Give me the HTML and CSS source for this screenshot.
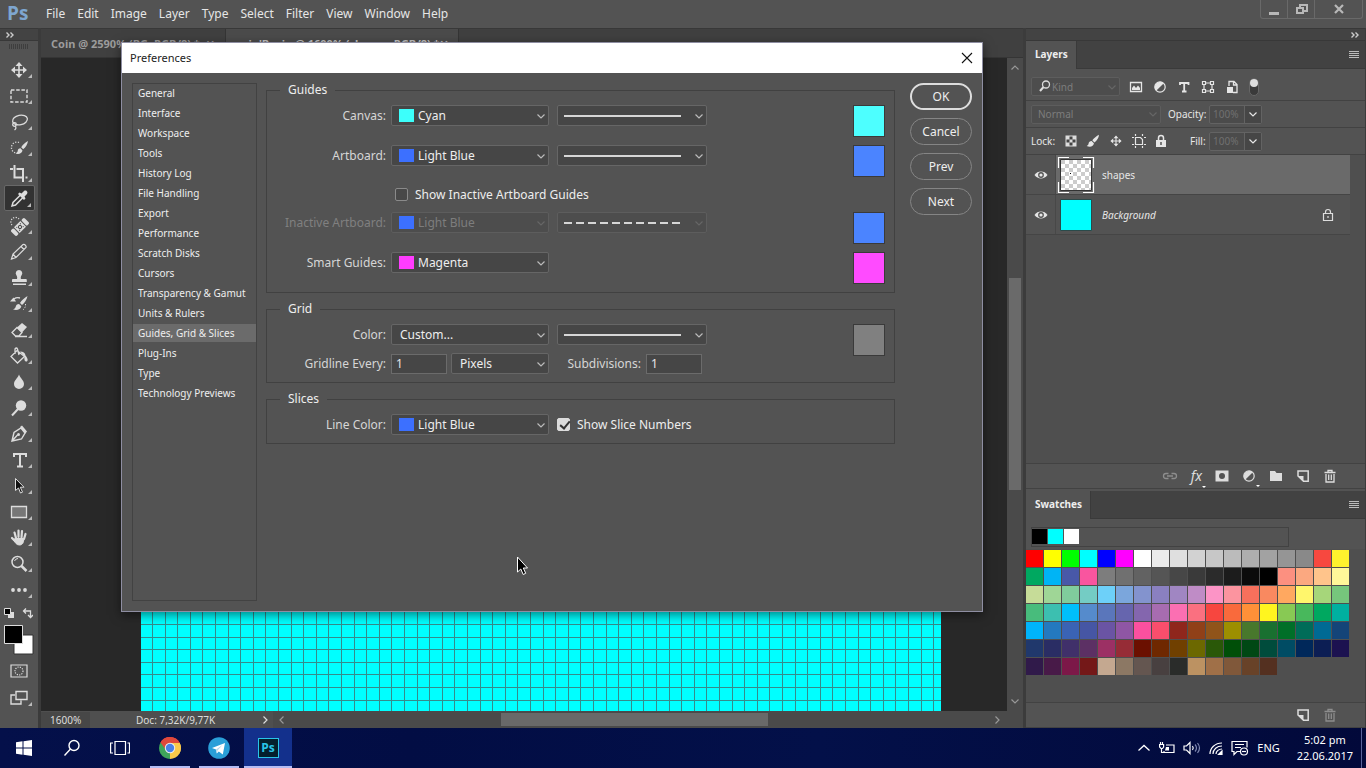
FILE: index.html
```html
<!DOCTYPE html>
<html lang="en">
<head>
<meta charset="utf-8">
<title>Preferences</title>
<link rel="stylesheet" href="styles.css">
</head>
<body>
<svg class="defs" aria-hidden="true">
  <defs>
    <symbol id="chev" viewBox="0 0 10 10"><path d="M1.5 3.5 5 7l3.500-3.500" fill="none" stroke="currentColor" stroke-width="1.200"/></symbol>
    <symbol id="hamb" viewBox="0 0 10 8"><path d="M0 .5h10M0 2.500h10M0 4.500h10M0 6.500h10" stroke="currentColor" stroke-width="1"/></symbol>
    <symbol id="dbl" viewBox="0 0 8 6"><path d="M.5.5 3 3 .5 5.500M4.500.5 7 3 4.500 5.500" fill="none" stroke="currentColor" stroke-width="1.400"/></symbol>
    <symbol id="move" viewBox="0 0 20 20"><path d="M10 4v12M4 10h12" stroke="currentColor" stroke-width="1.600"/><path d="M10 2 13.500 6h-7zM10 18l3.500-4h-7zM2 10l4-3.500v7zM18 10l-4-3.500v7z" fill="currentColor"/></symbol>
    <symbol id="brush" viewBox="0 0 20 20"><path d="M18.500 1c-3 1.500-7.500 5-9.500 8l3 3C15.500 9.500 18.500 5 18.500 1zM8 10c-2.500 0-4 1.500-4.300 3.500C3.400 15.500 2.500 16.500 1 17c4 2 9.800 1.500 10.300-3.700z" fill="currentColor"/></symbol>
    <symbol id="new" viewBox="0 0 14 14"><path d="M2 2h10.200v10.200H7.500L2 7V2z" fill="none" stroke="currentColor" stroke-width="1.500"/><path d="M2 7h5.500v5.500z" fill="currentColor"/></symbol>
    <symbol id="trash" viewBox="0 0 14 14"><path d="M1.500 3.500h11M5 3.200V1.500h4v1.700M3 5v8h8V5M5.700 5.500v5.500M8.300 5.500v5.500" fill="none" stroke="currentColor" stroke-width="1.300"/></symbol>
    <symbol id="adjust" viewBox="0 0 14 14"><circle cx="7" cy="7" r="5.200" fill="none" stroke="currentColor" stroke-width="1.200"/><path d="M10.800 3.200 3.200 10.800A5.400 5.400 0 0 1 10.800 3.200z" fill="currentColor"/></symbol>
    <symbol id="eye" viewBox="0 0 14 10"><path d="M.5 5C3.500.4 10.500.4 13.500 5 10.500 9.600 3.500 9.600.5 5z" fill="currentColor"/><circle cx="7" cy="5" r="2.900" fill="#535353"/><circle cx="7" cy="5" r="1.600" fill="currentColor"/></symbol>
    <pattern id="gridlines" width="63" height="63" x="11" y="62" patternUnits="userSpaceOnUse">
      <path d="M.5 0v63M13.500 0v63M25.500 0v63M38.500 0v63M50.500 0v63M0 .5h63M0 13.500h63M0 25.500h63M0 38.500h63M0 50.500h63" stroke="#358b8b" stroke-width="1"/>
    </pattern>
    <pattern id="checker" width="8" height="8" patternUnits="userSpaceOnUse"><path d="M0 0h4v4H0zM4 4h4v4H4z" fill="#ccc"/></pattern>
  </defs>
</svg>

<div class="app">
  <header class="menubar">
    <span class="logo">Ps</span>
    <nav class="menus">
      <a href="#">File</a><a href="#">Edit</a><a href="#">Image</a><a href="#">Layer</a><a href="#">Type</a><a href="#">Select</a><a href="#">Filter</a><a href="#">View</a><a href="#">Window</a><a href="#">Help</a>
    </nav>
    <div class="winctl">
      <button aria-label="Minimize"><svg width="12" height="12"><path d="M1 10.500h10" stroke="currentColor" stroke-width="3"/></svg></button>
      <button aria-label="Restore"><svg width="13" height="12" fill="none" stroke="currentColor" stroke-width="2"><path d="M5 6V2h7v6H8"/><path d="M2 5h6v5H2z"/></svg></button>
      <button aria-label="Close" class="wide"><svg width="12" height="11"><path d="M2 1l8 8M10 1 2 9" stroke="currentColor" stroke-width="2.200"/></svg></button>
    </div>
  </header>

  <div class="workspace">
    <aside class="toolbar">
      <div class="strip"><svg width="8" height="6"><use href="#dbl"/></svg></div>
      <div class="grip"></div>
      <div class="tools">
        <button aria-label="Move"><svg viewBox="0 0 20 20"><use href="#move"/></svg></button>
        <button aria-label="Marquee"><svg viewBox="0 0 20 20"><path d="M2 4h16v12H2z" fill="none" stroke="currentColor" stroke-width="1.400" stroke-dasharray="3.500 1.700"/></svg></button>
        <button aria-label="Lasso"><svg viewBox="0 0 20 20" fill="none" stroke="currentColor" stroke-width="1.300"><ellipse cx="11" cy="8" rx="7.500" ry="4.800" transform="rotate(-12 11 8)"/><circle cx="5.500" cy="12.500" r="1.800"/><path d="M6 14c1.500 1.500 1 3-.5 4"/></svg></button>
        <button aria-label="Quick selection"><svg viewBox="0 0 20 20"><path d="M10 4.500A5.500 5.500 0 1 0 9 15" fill="none" stroke="currentColor" stroke-width="1.300" stroke-dasharray="1.200 1.500"/><path d="M19 3c-3 1.500-5 3.500-6.800 6.200l2 2C17 9 18.500 6 19 3zM11.500 10.300c-2 0-2.500 1.200-2.800 2.600-.2 1.200-.9 2-2.200 2.600 3 .9 6.400.4 7-3z" fill="currentColor"/></svg></button>
        <button aria-label="Crop"><svg viewBox="0 0 20 20" fill="none" stroke="currentColor" stroke-width="2"><path d="M5.500 1v12.500h9M1 5h3m3.500 0h6.500V18M16.500 13.500h2"/></svg></button>
        <button aria-label="Eyedropper" class="active"><svg viewBox="0 0 20 20"><path d="M11.500 6 4 13.500 3 17l3.500-1L14 8.500" fill="none" stroke="currentColor" stroke-width="1.500"/><path d="m9 5 1.500-1.500 2 1L15 2c2-1.500 4.500 1 3 3l-2.500 2.500 1 2L15 11z" fill="currentColor"/></svg></button>
        <button aria-label="Healing brush"><svg viewBox="0 0 20 20"><path d="M3 9a4.500 4.500 0 0 1 7-6" fill="none" stroke="currentColor" stroke-width="1.200" stroke-dasharray="1.200 1.400"/><g transform="rotate(-45 11 11)"><rect x="1.500" y="7" width="4" height="8" rx="1.500" fill="currentColor"/><rect x="16.500" y="7" width="4" height="8" rx="1.500" fill="currentColor"/><rect x="6.500" y="7" width="9" height="8" fill="currentColor"/><circle cx="11" cy="11" r="1.600" fill="none" stroke="#444"/><path d="M8 9h1M8 13h1M13 9h1M13 13h1" stroke="#444"/></g></svg></button>
        <button aria-label="Pencil"><svg viewBox="0 0 20 20" fill="none" stroke="currentColor" stroke-width="1.200"><path d="m2.500 17 1.500-5L14 2.500q1.500-.5 2.500.8t.5 2.200L7 15.500zM4 12l3 3.500M12 4.500l3 3"/></svg></button>
        <button aria-label="Stamp"><svg viewBox="0 0 20 20" fill="currentColor"><path d="M10 2a3.300 3.300 0 0 1 2.600 5.300c-1 1.500-1 3-.6 3.700h5q.8 0 .8 1v2H3v-2q0-1 .8-1H8c.4-1 .3-2.500-.6-3.700A3.300 3.300 0 0 1 10 2zM4 15.500h13V17H4z"/></svg></button>
        <button aria-label="History brush"><svg viewBox="0 0 20 20"><path d="M18.500 2c-3 1.500-6 4.500-7.500 7l2 2c2.500-2 5-5.500 5.500-9zM10 10c-2 0-3 1.200-3.300 2.800-.2 1.300-1.200 2-2.700 2.700 3.500 1 7.700.4 8.300-3.300zM1 7.500l3.500-4 2.500 4z" fill="currentColor"/><path d="M5 5c2-1.500 4-1.500 6-1" fill="none" stroke="currentColor" stroke-width="1.300"/><path d="M16.500 10c.3 3-1 5-3.500 6.500" fill="none" stroke="currentColor" stroke-dasharray="1.200 1.400"/></svg></button>
        <button aria-label="Eraser"><svg viewBox="0 0 20 20"><path d="m8 7.500 5-4.500 5 4-5 5.500z" fill="currentColor"/><path d="m8 7.500-5 5 3.500 3.500H10l3-3.500zM6 16.500h12" fill="none" stroke="currentColor" stroke-width="1.300"/></svg></button>
        <button aria-label="Paint bucket"><svg viewBox="0 0 20 20"><path d="m8 4.500 7.500 6-7 6.500L2 10.500zM6 8V3q1.500-2 2.500 0L10 9" fill="none" stroke="currentColor" stroke-width="1.300"/><path d="M11 5.500q5 0 5.500 4c3 3.500 2.500 6 .8 6s-2.300-2-1.800-5z" fill="currentColor"/></svg></button>
        <button aria-label="Blur"><svg viewBox="0 0 20 20"><path d="M10 2.500c1.500 4 5 6 5 9.500a5 5 0 0 1-10 0c0-3.500 3.500-5.500 5-9.500z" fill="currentColor"/></svg></button>
        <button aria-label="Dodge"><svg viewBox="0 0 20 20"><circle cx="12" cy="7.500" r="5.200" fill="currentColor"/><path d="m9 11-6 6.500" stroke="currentColor" stroke-width="2"/></svg></button>
        <button aria-label="Pen"><svg viewBox="0 0 20 20"><path d="M3 17 5 8.500 12 4l4 5-3.500 6zM3 17l5.500-6" fill="none" stroke="currentColor" stroke-width="1.400"/><circle cx="9.500" cy="10.500" r="1.500" fill="currentColor"/><path d="m11 3 2-1.500 5 6-1.500 2z" fill="currentColor"/></svg></button>
        <button aria-label="Type"><svg viewBox="0 0 20 20"><path d="M5 7V4h12v3M11 4v12.500M8 16.500h6" fill="none" stroke="currentColor" stroke-width="2"/></svg></button>
        <button aria-label="Path selection"><svg viewBox="0 0 20 20"><path d="M6.500 2.500v12l3-2.500 2 5 2-.8-2.200-5H15z" fill="#111" stroke="currentColor"/></svg></button>
        <button aria-label="Rectangle"><svg viewBox="0 0 20 20"><path d="M2.500 4.500h15v11h-15z" fill="#777" stroke="currentColor" stroke-width="1.300"/></svg></button>
        <button aria-label="Hand"><svg viewBox="0 0 20 20" fill="none" stroke="currentColor" stroke-width="2.200" stroke-linecap="round"><path d="M7 10 5.500 4.500M9.500 9V2.500M12.500 9.500l.5-6.500M15 11l1.500-5M6 13l-3-3"/><path d="M6.500 10.500h8c.5 4-1 6.500-4 6.500s-4-2-6-5z" fill="currentColor" stroke-width="1"/></svg></button>
        <button aria-label="Zoom"><svg viewBox="0 0 20 20" fill="none" stroke="currentColor"><circle cx="8.500" cy="8" r="5.500" stroke-width="1.500"/><path d="M5.500 7q1-2.500 3.500-2.500" stroke-width="1"/><path d="m12.500 12 5 5" stroke-width="2.500"/></svg></button>
        <button aria-label="More tools"><svg viewBox="0 0 20 20" fill="currentColor"><circle cx="4" cy="10" r="1.900"/><circle cx="10" cy="10" r="1.900"/><circle cx="16" cy="10" r="1.900"/></svg></button>
      </div>
      <div class="mini">
        <svg width="10" height="10"><path d="M4 4h6v6H4z" fill="#ddd"/><path d="M.5.5h6v6h-6z" fill="#000" stroke="#ddd"/></svg>
        <svg width="11" height="11" fill="none" stroke="#ddd" stroke-width="1.300"><path d="M2 3h6.500v6M4 .5 1.500 3 4 5.500M6 7l2.500 2.500L11 7"/></svg>
      </div>
      <svg class="fgbg" width="30" height="30"><path d="M10 10h19v19H10z" fill="#fff" stroke="#333"/><path d="M.5.5h18v18H.5z" fill="#000" stroke="#ddd"/></svg>
      <button class="mode" aria-label="Quick mask"><svg viewBox="0 0 20 20" fill="none" stroke="currentColor" stroke-width="1.200"><path d="M2 4h16v12H2z"/><circle cx="10" cy="10" r="4" stroke-dasharray="1.200 1.200"/></svg></button>
      <button class="mode corner" aria-label="Screen mode"><svg viewBox="0 0 20 20" fill="none" stroke="currentColor" stroke-width="1.400"><path d="M7 3.500h11v8H7zM6 7H2v9h10v-3.500"/></svg></button>
    </aside>

    <main class="document">
      <div class="tabs">
        <a href="#" class="tab">Coin @ 2590% (BG, RGB/8) * <span class="x">×</span></a>
        <a href="#" class="tab current">coin'Bcoin @ 1600% (shapes, RGB/8) * <span class="x">×</span></a>
      </div>
      <div class="stage">
        <div class="canvas"><svg width="100%" height="100%"><rect width="100%" height="100%" fill="url(#gridlines)"/></svg></div>
        <div class="vscroll"><svg width="10" height="10" class="up"><use href="#chev"/></svg><div class="vthumb"></div><svg width="10" height="10"><use href="#chev"/></svg></div>
      </div>
      <div class="status">
        <span class="pct">1600%</span>
        <span class="doc">Doc: 7,32K/9,77K</span>
        <svg width="10" height="10" class="right lit"><use href="#chev"/></svg>
        <div class="hscroll"><svg width="10" height="10" class="left"><use href="#chev"/></svg><div class="hthumb"></div><svg width="10" height="10" class="right"><use href="#chev"/></svg></div>
      </div>
    </main>

    <aside class="panels">
      <div class="strip end"><svg width="8" height="6"><use href="#dbl"/></svg></div>
      <section class="panel layers">
        <div class="phead"><h2>Layers</h2><svg width="10" height="8"><use href="#hamb"/></svg></div>
        <div class="prow filter">
          <div class="sel dim kind"><svg class="mag" width="12" height="12" fill="none" stroke="#ddd"><circle cx="7" cy="4.500" r="3.500" stroke-width="1.300"/><path d="M4.500 7 1 11" stroke-width="2"/></svg><select aria-label="Filter kind" disabled><option>Kind</option></select><svg class="cv" width="10" height="10"><use href="#chev"/></svg></div>
          <div class="ficons">
            <svg width="14" height="14"><path d="M1.500 2.500h11v9h-11z" fill="none" stroke="currentColor" stroke-width="1.300"/><path d="M3 10V8l2-2.500L7 8l2-2.500L11 8v2z" fill="currentColor"/></svg>
            <svg width="14" height="14"><use href="#adjust"/></svg>
            <svg width="14" height="14"><path d="M3 5V3h8.500v2M7.200 3v9M5 11.500h4.500" fill="none" stroke="currentColor" stroke-width="1.800"/></svg>
            <svg width="14" height="14" fill="none" stroke="currentColor" stroke-width="1.200"><path d="M3 3h8v8H3z"/><path d="M1.500 1.500h3v3h-3zM9.500 1.500h3v3h-3zM1.500 9.500h3v3h-3zM9.500 9.500h3v3h-3z" fill="#535353"/></svg>
            <svg width="14" height="14"><path d="M4 6V1.500h5L12 4.500v8H8M8.500 2v3H12" fill="none" stroke="currentColor" stroke-width="1.300"/><path d="M2 7h6v6H2z" fill="currentColor"/></svg>
            <svg width="10" height="18"><rect x=".5" y=".5" width="9" height="17" rx="4.500" fill="#3a3a3a" stroke="#666"/><circle cx="5" cy="5" r="4" fill="#ddd"/></svg>
          </div>
        </div>
        <div class="prow blend">
          <div class="sel dim mode-sel"><select aria-label="Blend mode" disabled><option>Normal</option></select><svg class="cv" width="10" height="10"><use href="#chev"/></svg></div>
          <label for="op">Opacity:</label>
          <div class="combo"><input id="op" value="100%" disabled><button aria-label="Opacity slider"><svg width="10" height="10"><use href="#chev"/></svg></button></div>
        </div>
        <div class="prow lock">
          <span>Lock:</span>
          <div class="licons">
            <svg width="12" height="12"><path d="M.5.5h11v11H.5z" fill="#ddd"/><path d="M4.500 1.500h3v3h-3zM1.500 4.500h3v3h-3zM7.500 4.500h3v3h-3zM4.500 7.500h3v3h-3z" fill="#444"/></svg>
            <svg width="14" height="14"><use href="#brush"/></svg>
            <svg width="14" height="14"><use href="#move"/></svg>
            <svg width="14" height="14" fill="none" stroke="currentColor" stroke-width="1.200"><path d="M3.500 3.500h5l2 2v5h-7zM0 3.500h2M3.500 0v2M12 10.500h2M10.500 12v2M0 10.500h2M3.500 12v2M12 3.500h2M10.500 0v2"/></svg>
            <svg width="12" height="14"><path d="M1 6h10v7H1z" fill="currentColor"/><path d="M3.500 6V4a2.500 2.500 0 0 1 5 0v2" fill="none" stroke="currentColor" stroke-width="1.500"/><path d="M6 8v3" stroke="#555" stroke-width="1.500"/></svg>
          </div>
          <label for="fill">Fill:</label>
          <div class="combo"><input id="fill" value="100%" disabled><button aria-label="Fill slider"><svg width="10" height="10"><use href="#chev"/></svg></button></div>
        </div>
        <div class="layerlist">
          <div class="layer">
            <span class="vis"><svg width="14" height="10"><use href="#eye"/></svg></span>
            <div class="lbody on"><svg width="38" height="38"><path d="M3.500 3.500h31v31h-31z" fill="#fff" stroke="#333"/><rect x="4" y="4" width="30" height="30" fill="url(#checker)"/><path d="M13 17h1v1h-1z"/><path d="M1.500 12V1.500H12M26 1.500h10.500V12M36.500 26v10.500H26M12 36.500H1.500V26" fill="none" stroke="#fff" stroke-width="1.200"/></svg><span>shapes</span></div>
          </div>
          <div class="layer">
            <span class="vis"><svg width="14" height="10"><use href="#eye"/></svg></span>
            <div class="lbody"><svg width="38" height="38"><path d="M3.500 3.500h31v31h-31z" fill="#0ff" stroke="#2b4a4a"/></svg><em>Background</em><svg class="lk" width="12" height="14" fill="none" stroke="#ddd" stroke-width="1.200"><path d="M1.500 5.500h9v7h-9zM3.500 5.500V4a2.500 2.500 0 0 1 5 0v1.500M6 8v2"/></svg></div>
          </div>
        </div>
        <div class="pfoot">
          <svg width="16" height="14" class="off" fill="none" stroke="currentColor" stroke-width="1.300"><path d="M6.500 4.500H4a2.500 2.500 0 0 0 0 5h2.500M9.500 4.500H12a2.500 2.500 0 0 1 0 5H9.500M5 7h6"/></svg>
          <span class="fx drop">fx</span>
          <svg width="14" height="14"><path d="M.5 1.500h13v11H.5z" fill="currentColor"/><circle cx="7" cy="7" r="3" fill="#535353"/></svg>
          <span class="drop"><svg width="14" height="14"><use href="#adjust"/></svg></span>
          <svg width="14" height="14"><path d="M1 2h5l1.500 2H13v8H1z" fill="currentColor"/></svg>
          <svg width="14" height="14"><use href="#new"/></svg>
          <svg width="14" height="14"><use href="#trash"/></svg>
        </div>
      </section>
      <section class="panel swatches">
        <div class="phead"><h2>Swatches</h2><svg width="10" height="8"><use href="#hamb"/></svg></div>
        <div class="recent"><i class="k"></i><i class="c"></i><i class="w"></i></div>
        <div class="swgrid" id="swgrid"></div>
        <div class="pfoot"><svg width="14" height="14"><use href="#new"/></svg><svg width="14" height="14" class="off"><use href="#trash"/></svg></div>
      </section>
    </aside>
  </div>

  <div class="dialog" role="dialog" aria-labelledby="dlg-title">
    <div class="dtitle"><span id="dlg-title">Preferences</span><button aria-label="Close"><svg width="12" height="12"><path d="m1 1 10 10M11 1 1 11" stroke="#111" stroke-width="1.100"/></svg></button></div>
    <div class="dbody">
      <nav class="cats">
        <a href="#">General</a><a href="#">Interface</a><a href="#">Workspace</a><a href="#">Tools</a><a href="#">History Log</a><a href="#">File Handling</a><a href="#">Export</a><a href="#">Performance</a><a href="#">Scratch Disks</a><a href="#">Cursors</a><a href="#">Transparency &amp; Gamut</a><a href="#">Units &amp; Rulers</a><a href="#" class="on">Guides, Grid &amp; Slices</a><a href="#">Plug-Ins</a><a href="#">Type</a><a href="#">Technology Previews</a>
      </nav>
      <form class="groups">
        <fieldset>
          <legend>Guides</legend>
          <div class="fgrid">
            <label for="cv">Canvas:</label>
            <div class="sel chip cyan"><select id="cv"><option>Cyan</option></select><svg class="cv" width="10" height="10"><use href="#chev"/></svg></div>
            <div class="sel line"><select aria-label="Canvas line style"><option aria-label="Solid"></option></select><svg class="cv" width="10" height="10"><use href="#chev"/></svg></div>
            <button type="button" class="well cyan" aria-label="Canvas color"></button>

            <label for="ab">Artboard:</label>
            <div class="sel chip blue"><select id="ab"><option>Light Blue</option></select><svg class="cv" width="10" height="10"><use href="#chev"/></svg></div>
            <div class="sel line"><select aria-label="Artboard line style"><option aria-label="Solid"></option></select><svg class="cv" width="10" height="10"><use href="#chev"/></svg></div>
            <button type="button" class="well blue" aria-label="Artboard color"></button>

            <label class="check wide"><input type="checkbox"><span>Show Inactive Artboard Guides</span></label>

            <label for="ia" class="dis">Inactive Artboard:</label>
            <div class="sel dim chip blue"><select id="ia" disabled><option>Light Blue</option></select><svg class="cv" width="10" height="10"><use href="#chev"/></svg></div>
            <div class="sel dim line dashed"><select aria-label="Inactive artboard line style" disabled><option aria-label="Dashed"></option></select><svg class="cv" width="10" height="10"><use href="#chev"/></svg></div>
            <button type="button" class="well blue" aria-label="Inactive artboard color"></button>

            <label for="sg">Smart Guides:</label>
            <div class="sel chip magenta"><select id="sg"><option>Magenta</option></select><svg class="cv" width="10" height="10"><use href="#chev"/></svg></div>
            <button type="button" class="well magenta" aria-label="Smart guides color"></button>
          </div>
        </fieldset>
        <fieldset>
          <legend>Grid</legend>
          <div class="fgrid">
            <label for="gc">Color:</label>
            <div class="sel"><select id="gc"><option>Custom...</option></select><svg class="cv" width="10" height="10"><use href="#chev"/></svg></div>
            <div class="sel line"><select aria-label="Grid line style"><option aria-label="Solid"></option></select><svg class="cv" width="10" height="10"><use href="#chev"/></svg></div>
            <button type="button" class="well gray tall" aria-label="Grid color"></button>
            <label for="ge">Gridline Every:</label>
            <div class="every">
              <input id="ge" value="1">
              <div class="sel unit"><select aria-label="Gridline unit"><option>Pixels</option></select><svg class="cv" width="10" height="10"><use href="#chev"/></svg></div>
              <label for="sd">Subdivisions:</label>
              <input id="sd" value="1">
            </div>
          </div>
        </fieldset>
        <fieldset>
          <legend>Slices</legend>
          <div class="fgrid">
            <label for="lc">Line Color:</label>
            <div class="sel chip blue"><select id="lc"><option>Light Blue</option></select><svg class="cv" width="10" height="10"><use href="#chev"/></svg></div>
            <label class="check"><input type="checkbox" checked><span>Show Slice Numbers</span></label>
          </div>
        </fieldset>
      </form>
      <div class="actions">
        <button class="ok">OK</button><button>Cancel</button><button>Prev</button><button>Next</button>
      </div>
    </div>
  </div>
  <svg class="cursor" width="12" height="20"><path d="M1.500 1v15l3.300-3 2.400 5.500 2.500-1.200-2.400-5.300h4.200z" fill="#000" stroke="#fff"/></svg>
</div>

<footer class="taskbar">
  <button aria-label="Start"><svg width="16" height="16" fill="#fff"><path d="M0 2.300 6.500 1.300v6.200H0zM7.500 1.200 16 0v7.500H7.500zM0 8.500h6.500v6.200L0 13.700zM7.500 8.500H16V16l-8.500-1.200z"/></svg></button>
  <button aria-label="Search"><svg width="18" height="18" fill="none" stroke="#fff" stroke-width="1.400"><circle cx="11" cy="6.500" r="5"/><path d="m7.500 10-6 6.500"/></svg></button>
  <button aria-label="Task view"><svg width="20" height="16" fill="none" stroke="#fff" stroke-width="1.200"><path d="M5 1.500h10.500v13H5zM3 3H.6v10H3M17.500 3h2v10h-2"/></svg></button>
  <button class="run chrome" aria-label="Chrome"><svg width="22" height="22" viewBox="0 0 22 22"><path d="M11 11 1.500 5.500A11 11 0 0 1 20.500 5.500z" fill="#e0483c"/><path d="M11 11 20.500 5.500A11 11 0 0 1 11 22z" fill="#fbc94a"/><path d="M11 11v11A11 11 0 0 1 1.500 5.500z" fill="#3fa55a"/><path d="M11 6h9.700a11 11 0 0 1-.7 11L15 14z" fill="#fbc94a"/><path d="M1.500 5.500A11 11 0 0 1 20.700 6H11L7 13z" fill="#e0483c"/><circle cx="11" cy="11" r="5.200" fill="#eee"/><circle cx="11" cy="11" r="4.200" fill="#4a80e8"/></svg></button>
  <button class="run" aria-label="Telegram"><svg width="22" height="22"><circle cx="11" cy="11" r="10.800" fill="#2a9fd8"/><path d="m4 11 13-5-2.200 11.500-4-3-2 2-.8-4z" fill="#fff"/><path d="m8 12.500 6.500-4.500-5 5.500-.7 3z" fill="#b8d8ea"/></svg></button>
  <button class="run focus" aria-label="Photoshop"><span class="pslogo">Ps</span></button>
  <div class="tray">
    <svg width="14" height="14" fill="none" stroke="#fff" stroke-width="1.300"><path d="m1.500 9.500 5.500-5 5.500 5"/></svg>
    <svg width="16" height="14" fill="none" stroke="#fff" stroke-width="1.200"><path d="M7 4h8v7.500H5V10M3.500 1v3M1.500 1v3M.6 3.500h4V6L3.500 7.500H2L.6 6zM2.500 8v3.500H5"/><path d="M7 6h3v3.500H6z" fill="#fff" stroke="none"/></svg>
    <svg width="18" height="14" fill="none" stroke="#fff" stroke-width="1.200"><path d="M1 5h2.500l3.500-3.500v11L3.500 9H1z"/><path d="M9.500 5q1.500 2 0 4"/><path d="M12 3.500q3 3.500 0 7M14.500 2q4 5 0 10" stroke="#7d86b0"/></svg>
    <svg width="14" height="14" fill="none" stroke="#fff" stroke-width="1.200"><path d="M1 13C1 7 6 2 13 2M4 13c0-4.500 4-8 9-8M7 13c0-3 3-5 6-5"/><path d="M9.500 13.500 13 10v3.500z" fill="#fff"/></svg>
    <svg width="18" height="16" fill="none" stroke="#fff" stroke-width="1.200"><path d="M9 11.500H6L3 14.500v-3H1v-10h15v6M4 4.500h9M4 7.500h6"/><circle cx="13" cy="11.500" r="3.500"/><path d="M11 11.500h4"/></svg>
    <span class="lang">ENG</span>
    <div class="clock"><span>5:02 pm</span><span>22.06.2017</span></div>
    <i class="peek"></i>
  </div>
</footer>
<script src="swatches.js"></script>
</body>
</html>
```
FILE: styles.css
```css
* { box-sizing: border-box; }
body {
  margin: 0;
  height: 100vh;
  display: flex;
  flex-direction: column;
  overflow: hidden;
  background: #535353;
  color: #e6e6e6;
  font: 12px/16px "Noto Sans", "Open Sans", sans-serif;
}
button, input, select { font: inherit; color: inherit; margin: 0; padding: 0; border: 0; background: none; border-radius: 0; }
a { color: inherit; text-decoration: none; }
svg { display: block; flex: none; }
.defs { position: absolute; width: 0; height: 0; }

.app { flex: 1; min-height: 0; display: flex; flex-direction: column; position: relative; }

/* menu bar */
.menubar { height: 28px; display: flex; align-items: flex-start; flex: none; }
.logo { width: 40px; padding-left: 7px; font: bold 19px/26px "Open Sans", sans-serif; color: #7ea6d0; }
.menus { display: flex; gap: 12px; padding: 6px 0 0 6px; }
.winctl { margin: 0 3px 0 auto; display: flex; height: 19px; border: 1px solid #696969; border-top: 0; border-radius: 0 0 3px 3px; color: #b8b8b8; }
.winctl button { width: 27px; display: flex; justify-content: center; align-items: center; border-right: 1px solid #696969; }
.winctl .wide { width: 47px; border-right: 0; }

.workspace { flex: 1; min-height: 0; display: grid; grid-template-columns: 41px 1fr 340px; }
.strip { height: 13px; background: #434343; border-top: 1px solid #383838; border-bottom: 1px solid #383838; padding: 3px 6px; color: #ccc; }
.strip.end { display: flex; justify-content: flex-end; }

/* toolbar */
.toolbar { border-right: 3px solid #3b3b3b; display: flex; flex-direction: column; color: #dcdcdc; }
.grip { height: 5px; margin: 3px 9px 6px; background: repeating-linear-gradient(90deg, #3e3e3e 0 1px, transparent 1px 2px); }
.tools { display: flex; flex-direction: column; }
.tools button, .mode { height: 26px; margin: 0 3px 0 4px; padding: 3px 0 0 5px; position: relative; }
.tools svg, .mode svg { width: 20px; height: 20px; }
.tools button::after, .corner::after { content: ""; position: absolute; right: 3px; bottom: 3px; border: 2px solid transparent; border-right-color: #bbb; border-bottom-color: #bbb; }
.tools .active { background: #323232; border: 1px solid #686868; border-radius: 2px; padding: 2px 0 0 4px; }
.mini { display: flex; gap: 8px; padding: 7px 0 0 4px; }
.fgbg { margin: 6px 0 0 4px; }
.mode { margin-top: 1px; }

/* document */
.document { display: flex; flex-direction: column; min-width: 0; min-height: 0; border-right: 3px solid #3c3c3c; }
.tabs { height: 30px; display: flex; background: #404040; border-top: 1px solid #383838; border-bottom: 1px solid #353535; font-weight: bold; font-size: 11px; color: #9c9c9c; }
.tab { width: 185px; padding: 7px 10px; white-space: nowrap; display: flex; justify-content: space-between; border-right: 1px solid #353535; }
.tab.current { width: 233px; background: #4b4b4b; color: #c4c4c4; }
.x { font-size: 16px; }
.stage { flex: 1; min-height: 0; display: flex; background: #282828; }
.canvas { flex: 1; margin: 0 66px 0 100px; background: #0ff; overflow: hidden; }
.vscroll { width: 16px; background: #4a4a4a; color: #999; display: flex; flex-direction: column; align-items: center; justify-content: space-between; padding: 5px 0; }
.vthumb { width: 12px; height: 212px; margin-top: 50px; margin-bottom: 52px; background: #6a6a6a; }
.up { transform: rotate(180deg); }
.left { transform: rotate(90deg); }
.right { transform: rotate(-90deg); }
.status { height: 17px; flex: none; display: flex; align-items: center; font-size: 10px; background: #4f4f4f; color: #ddd; }
.pct { width: 49px; padding-left: 9px; background: #474747; }
.doc { width: 170px; padding-left: 46px; }
.lit { color: #ddd; }
.hscroll { flex: 1; margin-left: 3px; height: 17px; padding: 0 21px 0 4px; display: flex; align-items: center; justify-content: space-between; background: #4a4a4a; color: #999; }
.hthumb { width: 267px; height: 13px; background: #696969; margin-right: 10px; }

/* panels */
.panels { display: flex; flex-direction: column; min-height: 0; border-right: 1px solid #3c3c3c; }
.panel { display: flex; flex-direction: column; }
.layers { height: 448px; flex: none; }
.swatches { flex: 1; min-height: 0; margin-top: 2px; }
.phead { height: 28px; flex: none; display: flex; align-items: center; justify-content: space-between; background: #424242; border-bottom: 1px solid #3a3a3a; padding-right: 6px; color: #bbb; }
h2 { margin: 0 0 -1px; height: 28px; padding: 5px 8px 0 9px; font: bold 10px/17px "Noto Sans", sans-serif; background: #535353; color: #eee; border-right: 1px solid #3a3a3a; }
.prow { display: flex; align-items: center; border-bottom: 1px solid #424242; padding-left: 5px; font-size: 10px; }
.filter { height: 32px; padding-top: 4px; }
.blend, .lock { height: 27px; }
.ficons { display: flex; align-items: center; gap: 10px; padding-left: 9px; }
.blend label { width: 48px; padding-left: 7px; }
.combo { display: flex; height: 19px; width: 53px; border: 1px solid #636363; border-radius: 2px; background: #4b4b4b; }
.combo input { width: 35px; padding-left: 3px; color: #707070; border-right: 1px solid #636363; }
.combo button { flex: 1; display: flex; align-items: center; justify-content: center; background: #464646; }
.lock span { width: 34px; }
.licons { display: flex; align-items: center; gap: 9px; width: 125px; }
.lock label { width: 19px; }
.layerlist { flex: 1; background: #4f4f4f; padding-right: 15px; }
.layer { height: 40px; display: flex; background: #535353; border-bottom: 1px solid #454545; font-size: 10px; }
.vis { width: 30px; display: flex; align-items: center; justify-content: center; border-right: 1px solid #484848; }
.lbody { flex: 1; display: flex; align-items: center; gap: 7px; padding-left: 1px; }
.lbody.on { background: #6a6a6a; }
.lk { margin: 0 16px 0 auto; }
.pfoot { height: 26px; flex: none; display: flex; align-items: center; justify-content: flex-end; gap: 13px; padding-right: 28px; border-top: 1px solid #424242; border-bottom: 1px solid #424242; color: #ddd; }
.layers .pfoot { background: #535353; }
.off { color: #8d8d8d; }
.fx { font: italic 14px/16px "Noto Sans", sans-serif; }
.drop { position: relative; }
.drop::after { content: ""; position: absolute; right: -4px; bottom: -4px; border: 2px solid transparent; border-top-color: #fff; border-bottom: 0; }
.recent { height: 20px; margin: 8px 76px 2px 5px; border: 1px solid #424242; display: flex; gap: 1px; }
.recent i { width: 15px; height: 15px; margin-top: 1px; }
.k { background: #000; }
.c { background: #0ff; }
.w { background: #fff; }
.swgrid { flex: 1; display: grid; grid-template-columns: repeat(18, 17px); grid-auto-rows: 17px; gap: 1px; background: #4f4f4f; padding-top: 1px; }

/* dialog */
.dialog { position: absolute; inset: 42px 383px 116px 121px; display: flex; flex-direction: column; background: #535353; border: 1px solid #8e8ea2; box-shadow: 0 3px 10px rgba(0, 0, 0, .5); }
.dtitle { height: 30px; flex: none; display: flex; align-items: center; justify-content: space-between; padding: 0 9px 0 8px; background: #fff; color: #222; }
.dtitle span { font-size: 11px; }
.dbody { flex: 1; min-height: 0; display: flex; align-items: stretch; padding: 9px 10px 10px 10px; }
.cats { width: 125px; margin-top: 1px; display: flex; flex-direction: column; gap: 2px; border: 1px solid #424242; font-size: 10px; }
.cats a { height: 18px; line-height: 18px; padding-left: 5px; color: #eee; white-space: nowrap; }
.cats .on { background: #6b6b6b; }
.groups { flex: 1; margin: 0 15px 0 9px; display: flex; flex-direction: column; gap: 8px; }
fieldset { margin: 0; padding: 7px 9px 8px 0; border: 1px solid #414141; min-width: 0; }
legend { margin-left: 13px; padding: 0 8px; height: 16px; color: #eee; }
.fgrid { display: grid; grid-template-columns: 124px 158px 158px 1fr 32px; row-gap: 8px; align-items: start; }
.fgrid > label { grid-column: 1; line-height: 22px; height: 21px; padding-right: 5px; text-align: right; white-space: nowrap; color: #d6d6d6; }
.fgrid > .dis { color: #808080; }
.sel { position: relative; height: 21px; background: #464646; border: 1px solid #666; border-radius: 2px; }
.sel select { appearance: none; width: 100%; height: 100%; padding-left: 8px; color: #eee; opacity: 1; display: block; }
.cv { position: absolute; right: 2px; top: 50%; margin-top: -5px; color: #bbb; pointer-events: none; }
.dim { background: #4d4d4d; border-color: #5d5d5d; }
.dim select { color: #7d7d7d; }
.dim .cv { color: #666; }
.chip select { padding-left: 26px; }
.chip::before { content: ""; position: absolute; left: 7px; top: 3px; width: 15px; height: 13px; background: var(--chip); }
.cyan { --chip: #3cfffb; --well: #4dffff; }
.blue { --chip: #3c70ff; --well: #4b84ff; }
.magenta { --chip: #ff3cff; --well: #ff4bff; }
.gray { --well: #808080; }
.line { margin-left: 8px; }
.line::before { content: ""; position: absolute; left: 6px; right: 25px; top: 9px; height: 2px; background: #d6d6d6; }
.dashed::before { background: repeating-linear-gradient(90deg, #d6d6d6 0 8px, transparent 8px 12px); }
.well { grid-column: 5; width: 32px; height: 32px; border: 1px solid #3a3a3a; background: var(--well); }
.tall { grid-row: 1 / span 2; }
.check { display: flex; align-items: center; gap: 7px; }
.fgrid > .check { grid-column: 3 / span 2; margin-left: 8px; color: #eee; line-height: 21px; }
.fgrid > .wide { grid-column: 2 / span 3; margin-left: 4px; height: 19px; line-height: 19px; }
.check input { appearance: none; width: 13px; height: 13px; border: 1px solid #8a8a8a; border-radius: 2px; background: #484848; position: relative; }
.check input:checked { background: #dcdcdc; border-color: #dcdcdc; }
.check input:checked::after { content: ""; position: absolute; left: 4px; top: 0; width: 4px; height: 8px; border: solid #333; border-width: 0 2px 2px 0; transform: rotate(40deg); }
.every { grid-column: 2 / span 3; height: 21px; display: flex; align-items: center; }
.every input { width: 56px; height: 20px; padding-left: 4px; background: #464646; border: 1px solid #6b6b6b; }
.unit { width: 98px; margin-left: 4px; }
.every label { width: 97px; padding-right: 5px; text-align: right; color: #d6d6d6; }
.actions { width: 62px; padding-top: 1px; display: flex; flex-direction: column; gap: 8px; }
.actions button { height: 27px; border: 1px solid #858585; border-radius: 14px; color: #eee; }
.actions .ok { border: 2px solid #ddd; }
.cursor { position: absolute; left: 516px; top: 556px; }

/* compact selects of the layers panel */
.panel .sel { height: 19px; }
.panel .kind { width: 89px; }
.panel .mode-sel { width: 130px; }
.panel .kind select { padding-left: 20px; }
.panel .mode-sel select { padding-left: 6px; }
.mag { position: absolute; left: 7px; top: 2px; }

/* taskbar */
.taskbar { height: 40px; flex: none; display: flex; background: linear-gradient(90deg, #04104a, #020d44 30%, #031049 60%, #02093a); color: #fff; }
.taskbar button { width: 48px; display: flex; align-items: center; justify-content: center; }
.taskbar .run { width: 40px; margin: 0 5px 0 4px; border-bottom: 2px solid #b4bcf4; padding-top: 2px; }
.taskbar .chrome { margin-left: 6px; }
.taskbar .focus { width: 48px; margin: 0; background: #13308c; }
.pslogo { width: 21px; height: 20px; border: 1px solid #29c4e8; background: #04202e; color: #29c4e8; font: bold 12px/17px "Open Sans", sans-serif; }
.tray { margin-left: auto; display: flex; align-items: center; gap: 8px; }
.lang { font-size: 11px; padding-right: 1px; }
.clock { display: flex; flex-direction: column; align-items: center; font-size: 11px; line-height: 16px; padding-left: 8px; }
.peek { width: 5px; height: 40px; border-left: 1px solid #59639a; }
```
FILE: swatches.js
```js
const rows = [
  "f00 ff0 0f0 0ff 00f f0f fff ebebeb dfdfdf d2d2d2 c7c7c7 bbb aeaeae a2a2a2 959595 898989 f7483f fff22d",
  "00a860 00b4f5 4858a8 f9559f 7d7d7d 707070 626262 555 474747 3a3a3a 2b2b2b 1c1c1c 0b0b0b 000 fc9080 fba880 ffc48b fff799",
  "c6dc98 9fd696 80cc9c 74ccc4 6dd0f9 7ba6dc 8393ce 8a80c0 a086c2 bf8cc6 fc94c6 fc949f f7705c f98960 ffa860 fff66c a6d67a 76c67c",
  "48bc7c 3cbfb0 00bffb 558bcc 5a76bb 6665ae 8466ae a76cb0 fb6fb2 fa7080 f7463f f96a3c ff9038 fff51f 88c954 48b85c 00a860 00b0a0",
  "00b4fb 2479bf 3a63b4 4656a4 6a54a4 8f56a4 fb509f fa4e6c 8f261c 904018 90541a 9c8f00 48782c 197030 006f28 006c58 006a94 144478",
  "20386c 2a2d64 40306a 5c3064 9c3064 962c36 6b1000 6f2800 704000 6c6800 2a5808 004f08 004814 004c3c 004c64 00285a 0c1e54 1c1250",
  "301a4a 481a48 7c1848 741818 c4a890 8c7864 645650 484040 2a2c2a bc9262 a07048 80583a 684228 543020"
];
const grid = document.getElementById("swgrid");
for (const hex of rows.join(" ").split(" ")) {
  const cell = document.createElement("button");
  cell.style.background = "#" + hex;
  cell.setAttribute("aria-label", "Swatch " + hex);
  grid.append(cell);
}
```
